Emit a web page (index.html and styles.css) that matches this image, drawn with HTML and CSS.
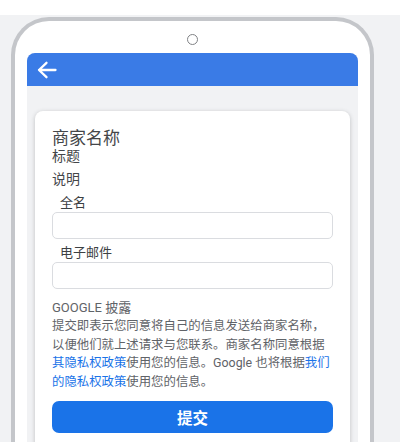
FILE: index.html
```html
<!DOCTYPE html>
<html lang="zh-CN">
<head>
<meta charset="utf-8">
<title>商家名称</title>
<link rel="stylesheet" href="styles.css">
</head>
<body>
<div class="page">
  <div class="phone">
    <div class="camera"></div>
    <div class="screen">
      <div class="appbar">
        <svg class="back" width="20" height="18" viewBox="0 0 20 18" aria-hidden="true">
          <path d="M2 9H18.5M9.5 1.8L2 9l7.5 7.2" fill="none" stroke="#fff" stroke-width="2.3" stroke-linecap="round" stroke-linejoin="round"/>
        </svg>
      </div>
      <div class="card">
        <div class="title">商家名称</div>
        <div class="subtitle">标题</div>
        <div class="desc">说明</div>
        <label class="label">全名</label>
        <div class="input"></div>
        <label class="label">电子邮件</label>
        <div class="input"></div>
        <div class="disclosure">GOOGLE 披露</div>
        <p class="legal">提交即表示您同意将自己的信息发送给商家名称，<br>以便他们就上述请求与您联系。商家名称同意根据<br><a>其隐私权政策</a>使用您的信息。Google 也将根据<a>我们<br>的隐私权政策</a>使用您的信息。</p>
        <div class="button">提交</div>
      </div>
    </div>
  </div>
</div>
</body>
</html>
```
FILE: styles.css
```css
html, body {
  margin: 0;
  background: #ffffff;
  font-family: Roboto, "Noto Sans CJK SC", sans-serif;
}
.page {
  margin-top: 15px;
  width: 400px;
  height: 427px;
  background: #f1f2f4;
  overflow: hidden;
  padding-top: 2px;
  box-sizing: border-box;
}
.phone {
  margin-left: 11px;
  width: 363px;
  height: 460px;
  box-sizing: border-box;
  border: 4px solid #c4c6ca;
  border-bottom: none;
  border-radius: 38px 38px 0 0;
  background: #ffffff;
  padding: 13px 12px 0;
}
.camera {
  width: 11px;
  height: 11px;
  box-sizing: border-box;
  border: 1px solid #808285;
  border-radius: 50%;
  margin: 0 auto;
}
.screen {
  margin-top: 8px;
  background: #f1f2f4;
  border-radius: 8px 8px 0 0;
  height: 420px;
}
.appbar {
  height: 33px;
  background: #3a7be6;
  border-radius: 8px 8px 0 0;
  display: flex;
  align-items: center;
  padding-left: 10px;
}
.back {
  display: block;
}
.card {
  margin: 25px 8px 0;
  background: #ffffff;
  border-radius: 8px;
  box-shadow: 0 1px 4px rgba(60, 64, 67, 0.28);
  padding: 17px 17px 20px;
}
.title {
  font-size: 17px;
  line-height: 20px;
  color: #444649;
}
.subtitle {
  font-size: 14px;
  line-height: 17px;
  color: #444649;
}
.desc {
  margin-top: 6px;
  font-size: 14px;
  line-height: 17px;
  color: #444649;
}
.label {
  display: block;
  margin-top: 7px;
  padding-left: 8px;
  font-size: 13px;
  line-height: 16px;
  color: #3c4043;
}
.desc + .label {
  margin-top: 7px;
}
.input + .label {
  margin-top: 6px;
}
.input {
  margin-top: 1px;
  height: 27px;
  box-sizing: border-box;
  border: 1px solid #dadce0;
  border-radius: 5px;
  background: #ffffff;
}
.disclosure {
  margin-top: 11px;
  font-size: 13px;
  line-height: 16px;
  color: #5f6368;
}
.legal {
  margin: 1px -4px 0 0;
  font-size: 12.4px;
  line-height: 18.7px;
  color: #5f6368;
  white-space: nowrap;
}
.legal a {
  color: #1a73e8;
}
.button {
  margin-top: 9px;
  height: 32px;
  border-radius: 7px;
  background: #1a73e8;
  color: #ffffff;
  font-size: 15.5px;
  font-weight: 700;
  display: flex;
  align-items: center;
  justify-content: center;
}
```
